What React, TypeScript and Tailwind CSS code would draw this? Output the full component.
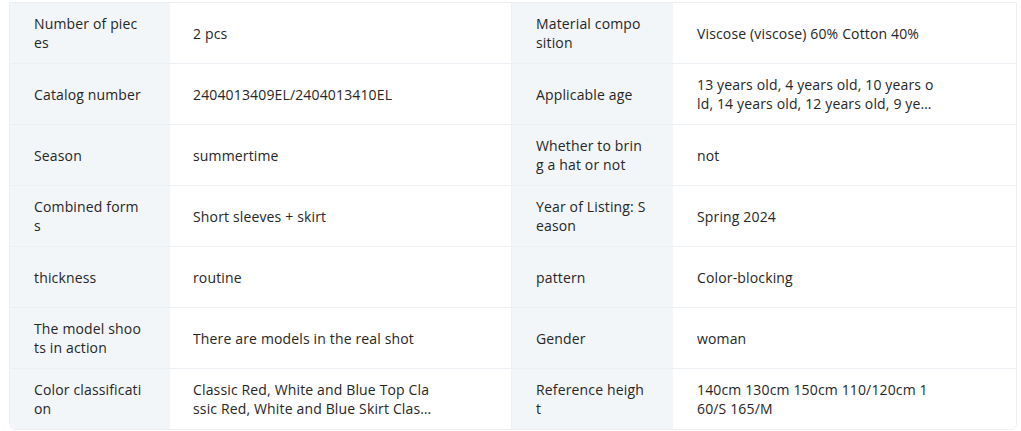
const rows: [string, string, string, string][] = [
  ['Number of pieces', '2 pcs', 'Material composition', 'Viscose (viscose) 60% Cotton 40%'],
  [
    'Catalog number',
    '2404013409EL/2404013410EL',
    'Applicable age',
    '13 years old, 4 years old, 10 years old, 14 years old, 12 years old, 9 years old, 8 years old, 7 years old',
  ],
  ['Season', 'summertime', 'Whether to bring a hat or not', 'not'],
  ['Combined forms', 'Short sleeves + skirt', 'Year of Listing: Season', 'Spring 2024'],
  ['thickness', 'routine', 'pattern', 'Color-blocking'],
  ['The model shoots in action', 'There are models in the real shot', 'Gender', 'woman'],
  [
    'Color classification',
    'Classic Red, White and Blue Top Classic Red, White and Blue Skirt Classic Red, White and Blue Set',
    'Reference height',
    '140cm 130cm 150cm 110/120cm 160/S 165/M',
  ],
];

const Label = ({ text, divider }: { text: string; divider?: boolean }) => (
  <div
    className={`flex shrink-0 items-center bg-[#f3f6f9] pl-[24px] ${
      divider ? 'w-[162px] border-l border-[#eef0f3]' : 'w-[160px]'
    }`}
  >
    <span className="line-clamp-2 w-[110px] break-all">{text}</span>
  </div>
);

const Value = ({ text, wide }: { text: string; wide?: boolean }) => (
  <div className={`flex items-center ${wide ? 'flex-1 pl-[24px]' : 'w-[341px] shrink-0 pl-[23px]'}`}>
    <span className={`line-clamp-2 break-all ${wide ? 'w-[237px]' : 'w-[240px]'}`}>{text}</span>
  </div>
);

export default function App() {
  return (
    <div className="min-h-[431px] bg-white pl-[9px] pr-[4px] pt-[2px] font-['Open_Sans',sans-serif] text-[14px] leading-[19px] tracking-[0.15px] text-[#262626]">
      <div className="overflow-hidden rounded-b-[6px] border border-[#eceff3]">
        {rows.map(([l1, v1, l2, v2], i) => (
          <div
            key={l1}
            className={`flex ${i < rows.length - 1 ? 'h-[61px] border-b border-[#eceff3]' : 'h-[60px]'}`}
          >
            <Label text={l1} />
            <Value text={v1} />
            <Label text={l2} divider />
            <Value text={v2} wide />
          </div>
        ))}
      </div>
    </div>
  );
}
